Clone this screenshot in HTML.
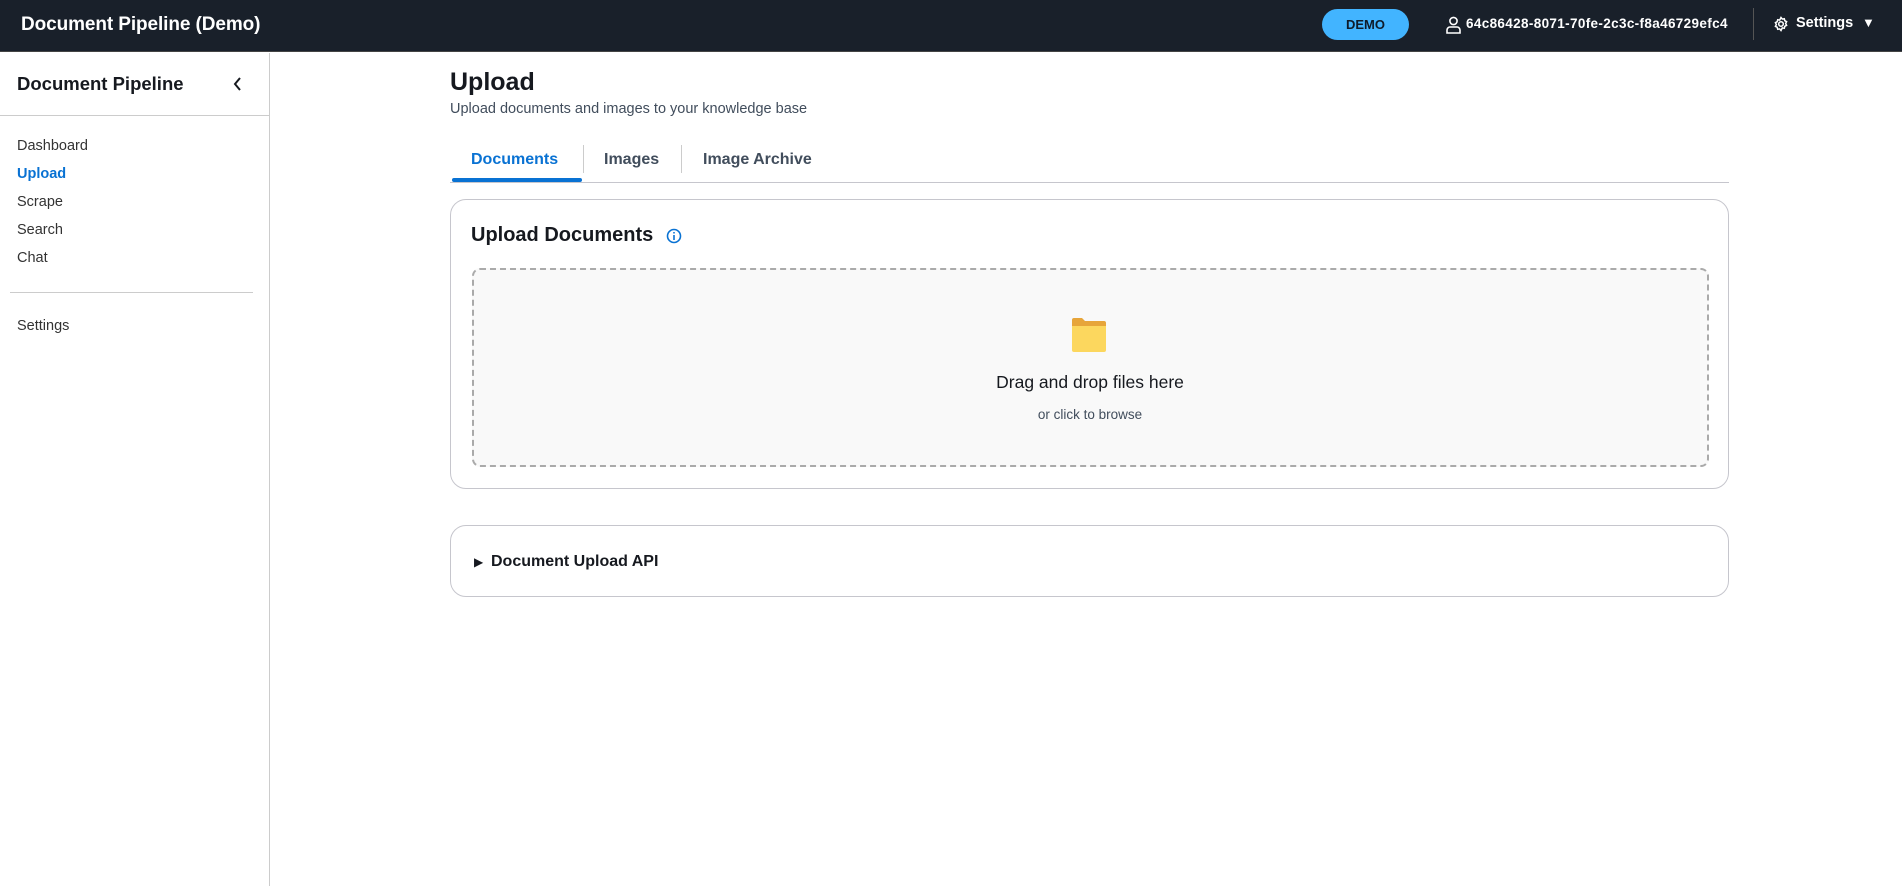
<!DOCTYPE html>
<html><head><meta charset="utf-8"><style>
*{box-sizing:border-box;margin:0;padding:0}
body{width:1902px;height:886px;overflow:hidden;font-family:"Liberation Sans",sans-serif;background:#fff;color:#16191f;position:relative}
.hdr{position:absolute;left:0;top:0;width:1902px;height:52px;background:#19202a;border-bottom:1px solid #444}
.abs{position:absolute;white-space:nowrap}
.side{position:absolute;left:0;top:53px;width:270px;height:833px;border-right:1px solid #ccc}
</style></head><body>
<div class="hdr">
<div class="abs" style="left:21px;top:14px;color:#fff;font-size:19px;font-weight:bold;letter-spacing:-0.1px">Document Pipeline (Demo)</div>
<div class="abs" style="left:1322px;top:9px;width:87px;height:31px;border-radius:16px;background:#42b4ff;color:#0f1b2a;font-size:13px;font-weight:bold;text-align:center;line-height:31px">DEMO</div>
<svg class="abs" style="left:1446px;top:16px" width="15" height="18" viewBox="0 0 15 18" fill="none" stroke="#fff" stroke-width="1.6"><circle cx="7.5" cy="5" r="3.6"/><path d="M1 17v-3a3 3 0 0 1 3-3h7a3 3 0 0 1 3 3v3z"/></svg>
<div class="abs" style="left:1466px;top:16px;color:#fff;font-size:13.5px;font-weight:bold;letter-spacing:0.35px">64c86428-8071-70fe-2c3c-f8a46729efc4</div>
<div class="abs" style="left:1753px;top:8px;width:1px;height:32px;background:#555"></div>
<svg class="abs" style="left:1773px;top:16px" width="16" height="16" viewBox="0 0 16 16" fill="none" stroke="#fff" stroke-width="1.5"><circle cx="8" cy="8" r="2.3"/><path d="M8 1.5l1.3 1.6 2-.4.5 2 1.8 1-1 1.8 1 1.8-1.8 1-.5 2-2-.4L8 14.5l-1.3-1.6-2 .4-.5-2-1.8-1 1-1.8-1-1.8 1.8-1 .5-2 2 .4z"/></svg>
<div class="abs" style="left:1796px;top:15px;color:#fff;font-size:14.5px;font-weight:bold">Settings</div>
<div class="abs" style="left:1862px;top:15px;color:#fff;font-size:13px">▼</div>
</div>
<div class="side">
<div class="abs" style="left:17px;top:20px;font-size:18.5px;font-weight:bold">Document Pipeline</div>
<svg class="abs" style="left:232px;top:23px" width="12" height="16" viewBox="0 0 12 16" fill="none" stroke="#16191f" stroke-width="2"><path d="M8 2L3 8l5 6"/></svg>
<div class="abs" style="left:0;top:62px;width:270px;height:1px;background:#ccc"></div>
<div class="abs" style="left:17px;top:79px;font-size:14.5px;color:#333;line-height:28px">Dashboard<br><span style="color:#0972d3;font-weight:bold">Upload</span><br>Scrape<br>Search<br>Chat</div>
<div class="abs" style="left:10px;top:239px;width:243px;height:1px;background:#ccc"></div>
<div class="abs" style="left:17px;top:265px;font-size:14.5px;color:#333">Settings</div>
</div>
<div class="abs" style="left:450px;top:68px;font-size:25px;font-weight:bold">Upload</div>
<div class="abs" style="left:450px;top:101px;font-size:14.5px;color:#414d5c">Upload documents and images to your knowledge base</div>
<div class="abs" style="left:471px;top:151px;font-size:16px;font-weight:bold;color:#0972d3">Documents</div>
<div class="abs" style="left:452px;top:178px;width:130px;height:4px;border-radius:2px;background:#0972d3"></div>
<div class="abs" style="left:583px;top:145px;width:1px;height:28px;background:#ccc"></div>
<div class="abs" style="left:604px;top:151px;font-size:16px;font-weight:bold;color:#414d5c">Images</div>
<div class="abs" style="left:681px;top:145px;width:1px;height:28px;background:#ccc"></div>
<div class="abs" style="left:703px;top:151px;font-size:16px;font-weight:bold;color:#414d5c">Image Archive</div>
<div class="abs" style="left:450px;top:182px;width:1279px;height:1px;background:#c6c6cd"></div>
<div class="abs" style="left:450px;top:199px;width:1279px;height:290px;border:1px solid #c6c6cd;border-radius:16px"></div>
<div class="abs" style="left:471px;top:224px;font-size:20px;font-weight:bold">Upload Documents</div>
<svg class="abs" style="left:666px;top:228px" width="16" height="16" viewBox="0 0 16 16" fill="none" stroke="#0972d3" stroke-width="1.6"><circle cx="8" cy="8" r="6.5"/><path d="M8 7v5M8 4v1.5"/></svg>
<div class="abs" style="left:472px;top:268px;width:1237px;height:199px;border:2px dashed #aaa;border-radius:8px;background:#f9f9f9"></div>
<svg class="abs" style="left:1068px;top:316px" width="44" height="38" viewBox="0 0 44 38"><path d="M4 4a2 2 0 0 1 2-2h8l3 3h19a2 2 0 0 1 2 2v6H4z" fill="#e7a53a"/><path d="M4 10h34v24a2 2 0 0 1-2 2H6a2 2 0 0 1-2-2z" fill="#fcd75e"/></svg>
<div class="abs" style="left:880px;top:372px;width:420px;text-align:center;font-size:17.5px;color:#16191f">Drag and drop files here</div>
<div class="abs" style="left:880px;top:407px;width:420px;text-align:center;font-size:13.5px;color:#414d5c">or click to browse</div>
<div class="abs" style="left:450px;top:525px;width:1279px;height:72px;border:1px solid #c6c6cd;border-radius:16px"></div>
<div class="abs" style="left:474px;top:555px;font-size:12px">▶</div>
<div class="abs" style="left:491px;top:553px;font-size:16px;font-weight:bold">Document Upload API</div>
</body></html>
